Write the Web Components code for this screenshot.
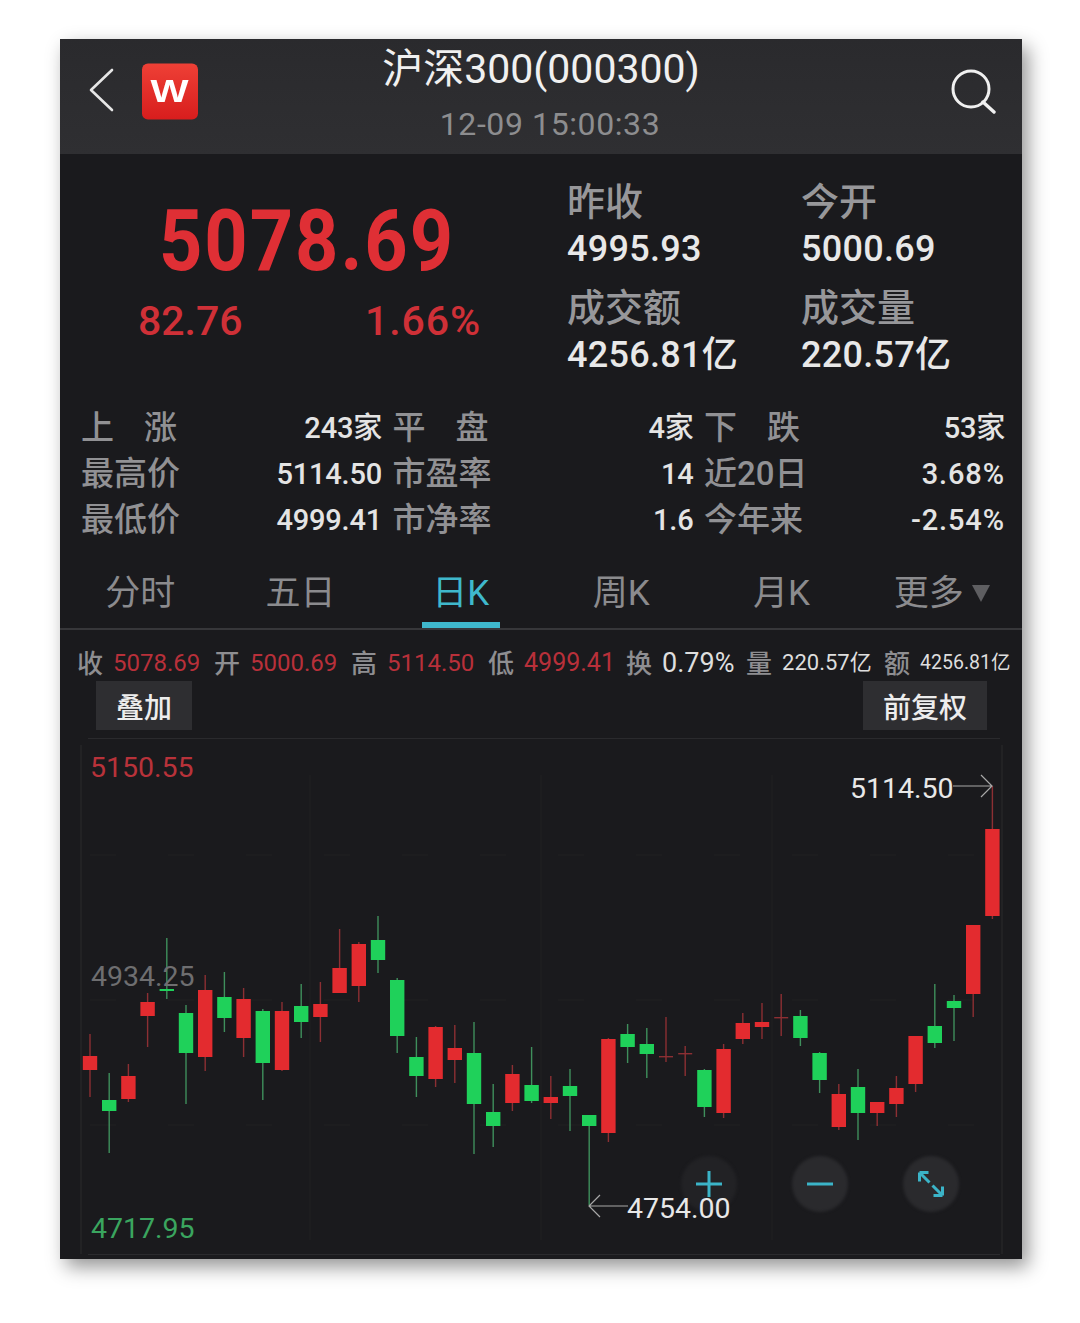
<!doctype html>
<html>
<head>
<meta charset="utf-8">
<title>沪深300</title>
<style>
  html, body { margin: 0; background: #fff; }
  body { font-family: Roboto, "Noto Sans CJK SC", sans-serif; padding: 39px 58px 64px 60px; }
</style>
</head>
<body>
<phone-card>
  <app-header title-text="沪深300(000300)" time-text="12-09 15:00:33"></app-header>
  <quote-panel>
    <quote-cell slot="cells" label="昨收">4995.93</quote-cell>
    <quote-cell slot="cells" label="今开">5000.69</quote-cell>
    <quote-cell slot="cells" label="成交额">4256.81亿</quote-cell>
    <quote-cell slot="cells" label="成交量">220.57亿</quote-cell>
  </quote-panel>
  <stat-grid>
    <stat-cell label="上涨">243家</stat-cell>
    <stat-cell label="平盘">4家</stat-cell>
    <stat-cell label="下跌">53家</stat-cell>
    <stat-cell label="最高价">5114.50</stat-cell>
    <stat-cell label="市盈率">14</stat-cell>
    <stat-cell label="近20日" wide>3.68%</stat-cell>
    <stat-cell label="最低价">4999.41</stat-cell>
    <stat-cell label="市净率">1.6</stat-cell>
    <stat-cell label="今年来" wide>-2.54%</stat-cell>
  </stat-grid>
  <tab-bar>
    <tab-item>分时</tab-item>
    <tab-item>五日</tab-item>
    <tab-item active>日K</tab-item>
    <tab-item>周K</tab-item>
    <tab-item>月K</tab-item>
    <tab-item more>更多</tab-item>
  </tab-bar>
  <summary-row>
    <sum-pair label="收" tone="red" w="86">5078.69</sum-pair>
    <sum-pair label="开" tone="red" w="86">5000.69</sum-pair>
    <sum-pair label="高" tone="red" w="86">5114.50</sum-pair>
    <sum-pair label="低" tone="red" size="25" w="87">4999.41</sum-pair>
    <sum-pair label="换" size="27" w="69">0.79%</sum-pair>
    <sum-pair label="量" size="22" w="87">220.57亿</sum-pair>
    <sum-pair label="额" size="19.5" w="90">4256.81亿</sum-pair>
  </summary-row>
  <tool-bar>
    <tool-button>叠加</tool-button>
    <tool-button>前复权</tool-button>
  </tool-bar>
  <kline-chart></kline-chart>
</phone-card>

<script>
customElements.define('phone-card', class extends HTMLElement {
  constructor() {
    super();
    this.attachShadow({ mode: 'open' }).innerHTML = `
      <style>
        :host {
          display: flex;
          flex-direction: column;
          width: 962px;
          height: 1220px;
          background: #1a1a1d;
          box-shadow: 6px 8px 18px rgba(0,0,0,.42);
          overflow: hidden;
        }
      </style>
      <slot></slot>
    `;
  }
});

customElements.define('app-header', class extends HTMLElement {
  constructor() {
    super();
    const root = this.attachShadow({ mode: 'open' });
    root.innerHTML = `
      <style>
        :host {
          display: grid;
          grid-template-columns: 200px 1fr 200px;
          height: 115px;
          background: linear-gradient(#2a2a2d, #2f2f32);
          box-sizing: border-box;
        }
        .left { display: flex; align-items: center; padding: 2.5px 0 0 29px; gap: 28px; height: 96px; }
        .logo {
          width: 56px; height: 56px; border-radius: 6px;
          background: linear-gradient(#ee4036, #d81d1d);
          color: #fff; font: bold 31px/56px "Liberation Sans", sans-serif;
          display: flex; justify-content: center;
          transform: translateY(1.5px);
        }
        .logo span { display: block; transform: scaleX(1.3); }
        .center { display: flex; flex-direction: column; align-items: center; }
        .title { color: #f0f0f0; font-size: 41px; line-height: 60px; white-space: nowrap; }
        .time { color: #8d8d8f; font-size: 32px; line-height: 40px; margin-top: 5px; padding-left: 18px; white-space: nowrap; letter-spacing: .6px; }
        .right { display: flex; justify-content: flex-end; padding: 29px 26px 0 0; }
      </style>
      <div class="left">
        <svg width="25" height="44" viewBox="0 0 25 44"><path d="M23 2 2 22l21 20" fill="none" stroke="#e6e6e6" stroke-width="2.6" stroke-linecap="round" stroke-linejoin="round"/></svg>
        <div class="logo"><span>W</span></div>
      </div>
      <div class="center">
        <div class="title"></div>
        <div class="time"></div>
      </div>
      <div class="right">
        <svg width="46" height="46" viewBox="0 0 46 46"><circle cx="21" cy="21" r="18" fill="none" stroke="#f0f0f0" stroke-width="3"/><path d="M33 34l11 10" fill="none" stroke="#f0f0f0" stroke-width="3.4" stroke-linecap="round"/></svg>
      </div>
    `;
    root.querySelector('.title').textContent = this.getAttribute('title-text');
    root.querySelector('.time').textContent = this.getAttribute('time-text');
  }
});

customElements.define('quote-panel', class extends HTMLElement {
  constructor() {
    super();
    this.attachShadow({ mode: 'open' }).innerHTML = `
      <style>
        :host {
          display: grid;
          grid-template-columns: 507px 1fr;
          height: 251px;
          color: #df2f35;
        }
        .main { display: flex; flex-direction: column; padding: 42px 0 0 0; }
        .price {
          font-size: 85px; line-height: 90px; font-weight: 700; letter-spacing: 2.2px;
          margin-left: 99px; white-space: nowrap;
          transform: scaleX(.89); transform-origin: left;
        }
        .change { display: flex; justify-content: space-between; margin: 10px 0 0 78px; width: 343px; font-size: 41px; font-weight: 500; line-height: 50px; color: #cf3037; }
        .change span + span { letter-spacing: .9px; }
        .cells { display: grid; grid-template-columns: 234px 1fr; row-gap: 11px; padding-top: 24px; align-content: start; }
      </style>
      <div class="main">
        <div class="price">5078.69</div>
        <div class="change"><span>82.76</span><span>1.66%</span></div>
      </div>
      <div class="cells"><slot name="cells"></slot></div>
    `;
  }
});

customElements.define('quote-cell', class extends HTMLElement {
  constructor() {
    super();
    const root = this.attachShadow({ mode: 'open' });
    root.innerHTML = `
      <style>
        :host { display: block; }
        .label { color: #97979a; font-size: 38px; font-weight: 500; line-height: 47px; padding-top: 1px; }
        .value { color: #e8e8e8; font-size: 36px; font-weight: 500; letter-spacing: .3px; line-height: 47px; white-space: nowrap; }
      </style>
      <div class="label"></div>
      <div class="value"><slot></slot></div>
    `;
    root.querySelector('.label').textContent = this.getAttribute('label');
  }
});

customElements.define('stat-grid', class extends HTMLElement {
  constructor() {
    super();
    this.attachShadow({ mode: 'open' }).innerHTML = `
      <style>
        :host {
          display: grid;
          grid-template-columns: repeat(3, 301px);
          column-gap: 10.5px;
          grid-auto-rows: 46px;
          padding-left: 21px;
        }
      </style>
      <slot></slot>
    `;
  }
});

customElements.define('stat-cell', class extends HTMLElement {
  constructor() {
    super();
    const root = this.attachShadow({ mode: 'open' });
    root.innerHTML = `
      <style>
        :host { display: flex; justify-content: space-between; }
        .label { color: #919194; font-size: 33px; font-weight: 500; line-height: 46px; width: 98px; white-space: nowrap; }
        .label.pair { display: flex; justify-content: space-between; width: 96px; }
        .value { color: #e4e4e4; font-size: 29px; font-weight: 500; letter-spacing: -.2px; line-height: 46px; white-space: nowrap; }
        :host([wide]) .value { letter-spacing: .9px; }
      </style>
      <div class="label"></div>
      <div class="value"><slot></slot></div>
    `;
    const label = this.getAttribute('label');
    const el = root.querySelector('.label');
    // two-character labels are spread over the width of three
    if (label.length === 2) {
      el.classList.add('pair');
      el.innerHTML = `<span>${label[0]}</span><span>${label[1]}</span>`;
    } else {
      el.textContent = label;
    }
  }
});

customElements.define('tab-bar', class extends HTMLElement {
  constructor() {
    super();
    this.attachShadow({ mode: 'open' }).innerHTML = `
      <style>
        :host {
          display: grid;
          grid-template-columns: repeat(6, 1fr);
          margin-top: 22px;
          height: 65px;
          box-sizing: border-box;
          border-bottom: 2px solid #37373a;
        }
      </style>
      <slot></slot>
    `;
  }
});

customElements.define('tab-item', class extends HTMLElement {
  constructor() {
    super();
    const root = this.attachShadow({ mode: 'open' });
    root.innerHTML = `
      <style>
        :host { display: flex; flex-direction: column; align-items: center; color: #8b8b8e; font-size: 35px; }
        :host([active]) { color: #3fb8cc; }
        .text { height: 54px; box-sizing: border-box; padding-top: 4px; line-height: 50px; white-space: nowrap; display: flex; align-items: center; gap: 8px; }
        .bar { width: 78px; height: 6px; margin-top: 3px; background: transparent; }
        :host([active]) .bar { background: #3fb8cc; }
        .caret { display: none; width: 0; height: 0; border: 9px solid transparent; border-top: 17px solid #5e5e61; border-bottom: 0; margin: -1px 0 0 0; }
        :host([more]) .caret { display: block; }
      </style>
      <div class="text"><slot></slot><span class="caret"></span></div>
      <div class="bar"></div>
    `;
  }
});

customElements.define('summary-row', class extends HTMLElement {
  constructor() {
    super();
    this.attachShadow({ mode: 'open' }).innerHTML = `
      <style>
        :host { display: flex; align-items: center; gap: 15px; height: 51px; box-sizing: border-box; padding: 17px 0 0 17px; }
      </style>
      <slot></slot>
    `;
  }
});

customElements.define('sum-pair', class extends HTMLElement {
  constructor() {
    super();
    const root = this.attachShadow({ mode: 'open' });
    root.innerHTML = `
      <style>
        :host { display: flex; gap: 10px; white-space: nowrap; line-height: 34px; }
        .label { color: #8e8e91; font-size: 26px; font-weight: 500; line-height: 36px; }
        .value { color: #dedede; font-size: 24px; }
        :host([tone="red"]) .value { color: #b8303a; }
      </style>
      <span class="label"></span><span class="value"><slot></slot></span>
    `;
    root.querySelector('.label').textContent = this.getAttribute('label');
    const value = root.querySelector('.value');
    if (this.hasAttribute('size')) value.style.fontSize = this.getAttribute('size') + 'px';
    value.style.width = this.getAttribute('w') + 'px';
  }
});

customElements.define('tool-bar', class extends HTMLElement {
  constructor() {
    super();
    this.attachShadow({ mode: 'open' }).innerHTML = `
      <style>
        :host { display: flex; justify-content: space-between; height: 49px; padding: 0 35px 0 36px; }
      </style>
      <slot></slot>
    `;
  }
});

customElements.define('tool-button', class extends HTMLElement {
  constructor() {
    super();
    this.attachShadow({ mode: 'open' }).innerHTML = `
      <style>
        :host { display: flex; align-items: center; padding: 0 20px; background: #2e2e31; color: #ededed; font-size: 28px; font-weight: 500; }
      </style>
      <slot></slot>
    `;
  }
});

// [up?, wick top, body top, body bottom, wick bottom], in page pixels
const CANDLES = [
  [1,1034,1056,1070,1097],[0,1073,1100,1111,1153],[1,1064,1076,1099,1102],[1,993,1002,1016,1047],
  [0,938,989,991,999],[0,1005,1013,1053,1104],[1,975,990,1057,1071],[0,972,997,1018,1032],
  [1,988,999,1038,1057],[0,1009,1011,1063,1100],[1,1002,1011,1070,1071],[0,984,1006,1022,1038],
  [1,982,1004,1017,1042],[1,929,968,993,993],[1,942,944,986,1002],[0,916,940,960,973],
  [0,978,980,1036,1053],[0,1037,1057,1076,1097],[1,1026,1027,1079,1087],[1,1025,1048,1060,1083],
  [0,1022,1053,1104,1154],[0,1084,1112,1126,1147],[1,1065,1074,1103,1111],[0,1047,1085,1101,1103],
  [1,1076,1097,1103,1119],[0,1069,1086,1096,1131],[0,1115,1115,1126,1205],[1,1038,1039,1133,1142],
  [0,1024,1034,1047,1063],[0,1028,1044,1054,1078],[1,1017,1056,1057,1062],[1,1046,1053,1054,1076],
  [0,1069,1070,1107,1117],[1,1044,1049,1113,1118],[1,1013,1023,1039,1044],[1,1003,1022,1027,1039],
  [1,994,1017,1018,1036],[0,1010,1016,1038,1046],[0,1052,1053,1080,1093],[1,1084,1094,1127,1130],
  [0,1069,1087,1113,1140],[1,1102,1102,1113,1126],[1,1076,1088,1104,1117],[1,1036,1036,1084,1092],
  [0,984,1026,1043,1048],[0,995,1001,1008,1041],[1,925,925,994,1017],[1,786,829,916,919]
];

customElements.define('kline-chart', class extends HTMLElement {
  constructor() {
    super();
    const root = this.attachShadow({ mode: 'open' });
    let marks = '';
    CANDLES.forEach(([up, top, bodyTop, bodyBottom, bottom], i) => {
      const x = 90 + 19.2 * i;
      const body = up ? '#e32b2f' : '#1fd15a';
      const wick = up ? '#8c2f33' : '#3f8f5c';
      const thin = bodyBottom - bodyTop < 2;
      marks += `<line x1="${x}" x2="${x}" y1="${top}" y2="${bottom}" stroke="${wick}" stroke-width="1.4"/>`;
      if (thin) {
        marks += `<rect x="${x - 7}" y="${bodyTop}" width="14" height="1.4" fill="${wick}"/>`;
      } else {
        marks += `<rect x="${x - 7.2}" y="${bodyTop}" width="14.4" height="${bodyBottom - bodyTop}" fill="${body}"/>`;
      }
    });
    root.innerHTML = `
      <style>
        :host { display: block; position: relative; height: 529px; }
        svg { display: block; }
        .tag { position: absolute; font-size: 28.5px; line-height: 34px; white-space: nowrap; }
        .hi { left: 30px; top: 21px; color: #b8323a; }
        .mid { left: 31px; top: 230px; color: #6e6e70; }
        .lo { left: 31px; top: 482px; color: #3aa55f; }
        .max { left: 790px; top: 42px; color: #e8e8e8; }
        .min { left: 567px; top: 462px; color: #e8e8e8; z-index: 1; }
        .zoom { position: absolute; top: 426px; left: 621px; display: flex; gap: 55px; }
        .zoom :first-child { --disc: #222225; }
      </style>
      <svg width="962" height="529" viewBox="60 730 962 529">
        <g stroke="#202023" stroke-width="1" fill="none">
          <path d="M310 775V1240M541 775V1240M772 775V1240"/>
          <path d="M90 855H995M90 1000H995M90 1125H995" stroke-dasharray="26 52"/>
        </g>
        <path d="M88 738.5H1000M81 745V1254M1002 745V1254M88 1254.5H1000" stroke="#2a2a2d" stroke-width="1" fill="none"/>
        ${marks}
        <g fill="none" stroke="#a8a8a8" stroke-width="1.2">
          <path d="M953 786H992M981 775l11 11-11 11"/>
          <path d="M628 1206H589M600 1195l-11 11 11 11"/>
        </g>
      </svg>
      <span class="tag hi">5150.55</span>
      <span class="tag mid">4934.25</span>
      <span class="tag lo">4717.95</span>
      <span class="tag max">5114.50</span>
      <span class="tag min">4754.00</span>
      <div class="zoom">
        <zoom-button><svg width="28" height="28" viewBox="0 0 28 28"><path d="M1 14h26M14 1v26" stroke="#3bb4c8" stroke-width="3"/></svg></zoom-button>
        <zoom-button><svg width="28" height="28" viewBox="0 0 28 28"><path d="M1 14h26" stroke="#3bb4c8" stroke-width="3"/></svg></zoom-button>
        <zoom-button><svg width="30" height="30" viewBox="0 0 30 30"><path d="M3.5 3.500l10 10M3.500 3.500h9M3.500 3.500v9M26.500 26.500l-10-10M26.500 26.500h-9M26.500 26.500v-9" fill="none" stroke="#3bb4c8" stroke-width="3"/></svg></zoom-button>
      </div>
    `;
  }
});

customElements.define('zoom-button', class extends HTMLElement {
  constructor() {
    super();
    this.attachShadow({ mode: 'open' }).innerHTML = `
      <style>
        :host { display: flex; align-items: center; justify-content: center; position: relative; width: 56px; height: 56px; }
        .disc { position: absolute; inset: 0; border-radius: 50%; background: var(--disc, #2a2a2d); filter: blur(1.5px); }
        ::slotted(svg) { position: relative; }
      </style>
      <div class="disc"></div>
      <slot></slot>
    `;
  }
});
</script>
</body>
</html>
